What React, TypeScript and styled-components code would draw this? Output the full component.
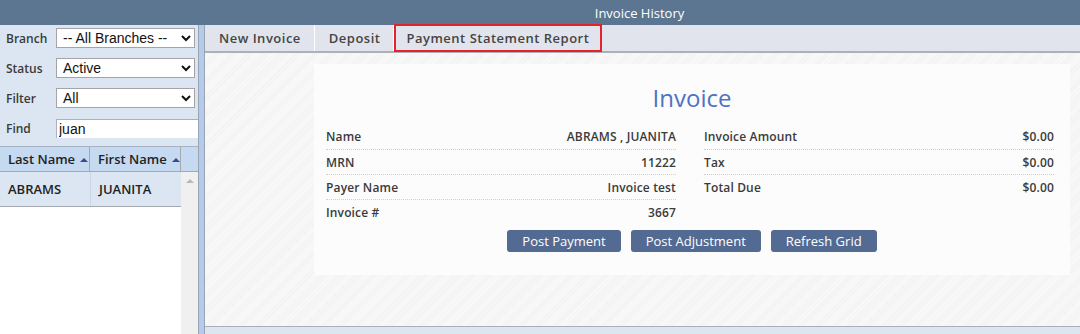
import React from "react";
import styled, { createGlobalStyle } from "styled-components";

const Global = createGlobalStyle`
  html, body { margin: 0; padding: 0; background: #fff; }
  body { font-family: "Open Sans", "Noto Sans", sans-serif; }
  * { box-sizing: border-box; }
`;

const Page = styled.div`
  width: 1080px;
  height: 334px;
  display: flex;
  flex-direction: column;
  overflow: hidden;
`;

const TitleBar = styled.div`
  height: 25px;
  background: #5c7591;
  color: #fff;
  font-size: 13px;
  display: flex;
  align-items: center;
  justify-content: center;
  padding-left: 199px;
`;

const Body = styled.div`
  flex: 1;
  display: flex;
  min-height: 0;
`;

const LeftPanel = styled.div`
  width: 198px;
  display: flex;
  flex-direction: column;
  background: #dce6f2;
`;

const Filters = styled.div`
  display: flex;
  flex-direction: column;
  gap: 10px;
  padding: 3px 0 8px 0;
`;

const FilterRow = styled.div`
  display: flex;
  align-items: center;
  height: 20px;
`;

const FilterLabel = styled.label`
  flex: 0 0 56px;
  padding-left: 6px;
  font-size: 12px;
  font-weight: 600;
  color: #3a3a3a;
`;

const Select = styled.select`
  width: 139px;
  height: 20px;
  font-family: "Liberation Sans", Arial, sans-serif;
  font-size: 14px;
  color: #111;
  border: 1px solid #a3a3a8;
  background: #fff;
  padding: 0 2px;
  border-radius: 0;
`;

const FindInput = styled.input`
  flex: 1;
  min-width: 0;
  height: 19px;
  font-family: "Liberation Sans", Arial, sans-serif;
  font-size: 14px;
  color: #111;
  border: none;
  border-top: 1px solid #b0b0b6;
  border-left: 1px solid #b0b0b6;
  background: #fff;
  padding: 0 2px;
  outline: none;
`;

const Grid = styled.div`
  flex: 1;
  display: flex;
  flex-direction: column;
  background: #fff;
`;

const GridHeader = styled.div`
  display: grid;
  grid-template-columns: 90px 91px 17px;
  height: 26px;
  background: #c5d9f0;
  border-top: 1px solid #a6b3c4;
  border-bottom: 1px solid #a4a9b0;
`;

const HeaderCell = styled.div`
  display: flex;
  align-items: center;
  padding-left: 8px;
  font-size: 13px;
  font-weight: 600;
  color: #222;
  border-right: 1px solid #a4a9b0;
  white-space: nowrap;
  &:last-child { border-right: none; }
`;

const SortArrow = styled.span`
  display: inline-block;
  width: 0;
  height: 0;
  margin-left: 5px;
  margin-top: 1px;
  border-left: 4px solid transparent;
  border-right: 4px solid transparent;
  border-bottom: 4px solid #2f4f8f;
`;

const GridBody = styled.div`
  flex: 1;
  display: grid;
  grid-template-columns: 181px 17px;
`;

const RowsArea = styled.div`
  display: flex;
  flex-direction: column;
`;

const GridRow = styled.div`
  display: grid;
  grid-template-columns: 90px 91px;
  height: 35px;
  background: #dce6f2;
  border-bottom: 1px solid #a4a9b0;
`;

const RowCell = styled.div`
  display: flex;
  align-items: center;
  padding-left: 8px;
  font-size: 13px;
  font-weight: 600;
  color: #222;
  & + & { border-left: 1px solid #c8d6e8; }
`;

const ScrollTrack = styled.div`
  background: #f0f0f0;
  display: flex;
  justify-content: center;
  padding-top: 7px;
`;

const ScrollUp = styled.span`
  width: 0;
  height: 0;
  border-left: 4px solid transparent;
  border-right: 4px solid transparent;
  border-bottom: 4px solid #b8b8b8;
`;

const Splitter = styled.div`
  width: 7px;
  background: #b4cbed;
  border-left: 1px solid #9aa3b0;
  border-right: 1px solid #9aa3b0;
`;

const RightPanel = styled.div`
  flex: 1;
  display: flex;
  flex-direction: column;
  min-width: 0;
`;

const TabBar = styled.div`
  height: 28px;
  display: flex;
  background: #e1e4ec;
  border-bottom: 2px solid #aeb0b5;
`;

const Tab = styled.div<{ $marked?: boolean }>`
  display: flex;
  align-items: center;
  padding: 0 ${(p) => (p.$marked ? "11px" : "13px")} 0 ${(p) => (p.$marked ? "10px" : "14px")};
  font-size: 13px;
  font-weight: 600;
  letter-spacing: 0.5px;
  color: #444;
  border-right: 1px solid #fff;
  ${(p) =>
    p.$marked &&
    `border: 2px solid #e3232a; margin-top: -1px; margin-bottom: -1px; position: relative;`}
`;

const Content = styled.div`
  flex: 1;
  padding: 11px 10px 0 109px;
  background-color: #f2f2f2;
  background-image: repeating-linear-gradient(
    135deg,
    rgba(255, 255, 255, 0.6) 0px,
    rgba(255, 255, 255, 0.6) 1px,
    rgba(0, 0, 0, 0) 1px,
    rgba(0, 0, 0, 0) 2px
  );
  border-bottom: 1px solid #a9b0ba;
`;

const Card = styled.div`
  height: 211px;
  background: rgba(252, 252, 252, 0.94);
  padding: 17px 16px 0 12px;
  display: flex;
  flex-direction: column;
`;

const CardTitle = styled.h1`
  margin: 0 -4px 0 0;
  text-align: center;
  font-size: 24px;
  font-weight: 400;
  color: #4d73c4;
  line-height: 34px;
  height: 43px;
`;

const Details = styled.div`
  display: grid;
  grid-template-columns: 350px 350px;
  column-gap: 28px;
  align-items: start;
`;

const DetailList = styled.div`
  display: flex;
  flex-direction: column;
`;

const DetailRow = styled.div`
  display: flex;
  justify-content: space-between;
  align-items: center;
  height: 25px;
  font-size: 12px;
  font-weight: 600;
  letter-spacing: 0.15px;
  color: #3a3a3a;
  & + & { border-top: 1px dotted #cfcfcf; }
`;

const Actions = styled.div`
  display: flex;
  justify-content: center;
  gap: 10px;
  margin: 6px -4px 0 0;
`;

const ActionButton = styled.button`
  height: 22px;
  padding: 0 15px;
  background: #536a92;
  color: #fff;
  border: none;
  border-radius: 3px;
  font-family: "Open Sans", sans-serif;
  font-size: 13px;
`;

const BottomBar = styled.div`
  height: 7px;
  background: #dce6f2;
`;

const leftDetails = [
  ["Name", "ABRAMS , JUANITA"],
  ["MRN", "11222"],
  ["Payer Name", "Invoice test"],
  ["Invoice #", "3667"],
];

const rightDetails = [
  ["Invoice Amount", "$0.00"],
  ["Tax", "$0.00"],
  ["Total Due", "$0.00"],
];

export default function App() {
  return (
    <Page>
      <Global />
      <TitleBar>Invoice History</TitleBar>
      <Body>
        <LeftPanel>
          <Filters>
            <FilterRow>
              <FilterLabel>Branch</FilterLabel>
              <Select defaultValue="all">
                <option value="all">-- All Branches --</option>
              </Select>
            </FilterRow>
            <FilterRow>
              <FilterLabel>Status</FilterLabel>
              <Select defaultValue="active">
                <option value="active">Active</option>
              </Select>
            </FilterRow>
            <FilterRow>
              <FilterLabel>Filter</FilterLabel>
              <Select defaultValue="all">
                <option value="all">All</option>
              </Select>
            </FilterRow>
            <FilterRow>
              <FilterLabel>Find</FilterLabel>
              <FindInput defaultValue="juan" />
            </FilterRow>
          </Filters>
          <Grid>
            <GridHeader>
              <HeaderCell>
                Last Name
                <SortArrow />
              </HeaderCell>
              <HeaderCell>
                First Name
                <SortArrow />
              </HeaderCell>
              <HeaderCell />
            </GridHeader>
            <GridBody>
              <RowsArea>
                <GridRow>
                  <RowCell>ABRAMS</RowCell>
                  <RowCell>JUANITA</RowCell>
                </GridRow>
              </RowsArea>
              <ScrollTrack>
                <ScrollUp />
              </ScrollTrack>
            </GridBody>
          </Grid>
        </LeftPanel>
        <Splitter />
        <RightPanel>
          <TabBar>
            <Tab>New Invoice</Tab>
            <Tab>Deposit</Tab>
            <Tab $marked>Payment Statement Report</Tab>
          </TabBar>
          <Content>
            <Card>
              <CardTitle>Invoice</CardTitle>
              <Details>
                <DetailList>
                  {leftDetails.map(([k, v]) => (
                    <DetailRow key={k}>
                      <span>{k}</span>
                      <span>{v}</span>
                    </DetailRow>
                  ))}
                </DetailList>
                <DetailList>
                  {rightDetails.map(([k, v]) => (
                    <DetailRow key={k}>
                      <span>{k}</span>
                      <span>{v}</span>
                    </DetailRow>
                  ))}
                </DetailList>
              </Details>
              <Actions>
                <ActionButton>Post Payment</ActionButton>
                <ActionButton>Post Adjustment</ActionButton>
                <ActionButton>Refresh Grid</ActionButton>
              </Actions>
            </Card>
          </Content>
          <BottomBar />
        </RightPanel>
      </Body>
    </Page>
  );
}
